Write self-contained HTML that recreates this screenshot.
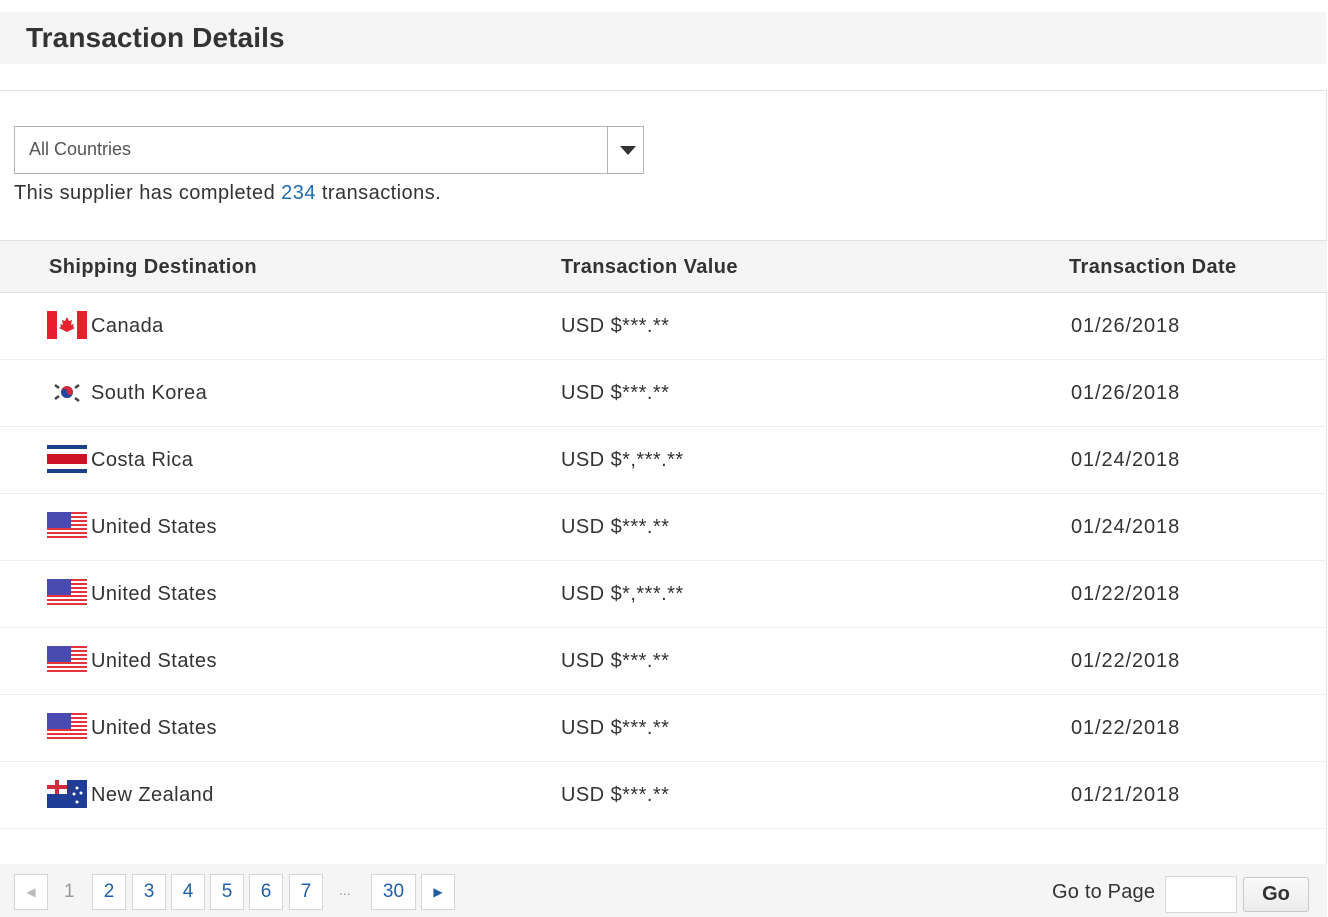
<!DOCTYPE html>
<html><head><meta charset="utf-8"><style>
*{margin:0;padding:0;box-sizing:border-box}
body{width:1328px;height:917px;background:#fff;font-family:"Liberation Sans",Arial,sans-serif;color:#333;position:relative;overflow:hidden}
.a{position:absolute}
.title{left:0;top:12px;width:1326px;height:52px;background:#f5f5f5;}
.title span{position:absolute;left:26px;top:10px;font-size:28px;font-weight:bold;color:#333;letter-spacing:0.1px}
.panel{left:0;top:90px;width:1327px;height:827px;border-top:1px solid #e3e3e3;border-right:1px solid #e3e3e3}
.sel{left:14px;top:126px;width:630px;height:48px;border:1px solid #b3b3b3;background:#fff}
.sel span{position:absolute;left:14px;top:12px;font-size:18px;color:#555}
.sel i{position:absolute;left:592px;top:0;width:1px;height:46px;background:#b3b3b3}
.sel b{position:absolute;left:605px;top:19px;border-left:8px solid transparent;border-right:8px solid transparent;border-top:9px solid #333}
.info{left:14px;top:182px;font-size:20px;color:#333;letter-spacing:0.45px}
.info em{font-style:normal;color:#1f6bb5}
.th{left:0;top:240px;width:1327px;height:53px;background:#f5f5f5;border-top:1px solid #e0e0e0;border-bottom:1px solid #e0e0e0}
.th span{position:absolute;top:15px;font-size:20px;font-weight:bold;color:#333;letter-spacing:0.4px}
.row{left:0;width:1327px;height:67px;border-bottom:1px solid #eee}
.row span{position:absolute;top:22px;font-size:20px;color:#333;letter-spacing:0.45px}
.row span.d{letter-spacing:0.9px}
.row svg{position:absolute;left:47px;top:18px}
.foot{left:0;top:864px;width:1327px;height:53px;background:#f5f5f5}
.pg{position:absolute;top:10px;height:36px;border:1px solid #d6d6d6;background:#fff;color:#1f5fa5;font-size:19px;text-align:center;line-height:34px}
</style></head><body>
<div class="a title"><span>Transaction Details</span></div>
<div class="a panel"></div>
<div class="a sel"><span>All Countries</span><i></i><b></b></div>
<div class="a info">This supplier has completed <em>234</em> transactions.</div>
<div class="a th"><span style="left:49px">Shipping Destination</span><span style="left:561px">Transaction Value</span><span style="left:1069px">Transaction Date</span></div>

<div class="a row" style="top:293px"><svg width="40" height="28"><rect width="40" height="28" fill="#fff"/><rect width="10" height="28" fill="#e8202e"/><rect x="30" width="10" height="28" fill="#e8202e"/><path d="M20 6l2 4 3-1-1 5 3-1-1 3 2 1-8 4-8-4 2-1-1-3 3 1-1-5 3 1z" fill="#e8202e"/></svg><span style="left:91px">Canada</span><span style="left:561px">USD $***.**</span><span class="d" style="left:1071px">01/26/2018</span></div>
<div class="a row" style="top:360px"><svg width="40" height="28"><circle cx="20" cy="14" r="6" fill="#d42a3c"/><path d="M14 14a6 6 0 0 0 12 0a3 3 0 0 1-6 0a3 3 0 0 0-6 0z" fill="#1f4aa0"/><g stroke="#444" stroke-width="2.5"><path d="M8 7l4 3M28 20l4 3M32 7l-4 3M8 21l4-3"/></g></svg><span style="left:91px">South Korea</span><span style="left:561px">USD $***.**</span><span class="d" style="left:1071px">01/26/2018</span></div>
<div class="a row" style="top:427px"><svg width="40" height="28"><rect width="40" height="28" fill="#fff"/><rect width="40" height="4" fill="#1b3f8b"/><rect y="24" width="40" height="4" fill="#1b3f8b"/><rect y="9" width="40" height="10" fill="#ce1126"/></svg><span style="left:91px">Costa Rica</span><span style="left:561px">USD $*,***.**</span><span class="d" style="left:1071px">01/24/2018</span></div>
<div class="a row" style="top:494px"><svg width="40" height="28"><rect width="40" height="28" fill="#fff"/><g fill="#e8323c"><rect y="0" width="40" height="2"/><rect y="4" width="40" height="2"/><rect y="8" width="40" height="2"/><rect y="12" width="40" height="2"/><rect y="16" width="40" height="2"/><rect y="20" width="40" height="2"/><rect y="24" width="40" height="2"/></g><rect width="24" height="16" fill="#4a4ab0"/></svg><span style="left:91px">United States</span><span style="left:561px">USD $***.**</span><span class="d" style="left:1071px">01/24/2018</span></div>
<div class="a row" style="top:561px"><svg width="40" height="28"><rect width="40" height="28" fill="#fff"/><g fill="#e8323c"><rect y="0" width="40" height="2"/><rect y="4" width="40" height="2"/><rect y="8" width="40" height="2"/><rect y="12" width="40" height="2"/><rect y="16" width="40" height="2"/><rect y="20" width="40" height="2"/><rect y="24" width="40" height="2"/></g><rect width="24" height="16" fill="#4a4ab0"/></svg><span style="left:91px">United States</span><span style="left:561px">USD $*,***.**</span><span class="d" style="left:1071px">01/22/2018</span></div>
<div class="a row" style="top:628px"><svg width="40" height="28"><rect width="40" height="28" fill="#fff"/><g fill="#e8323c"><rect y="0" width="40" height="2"/><rect y="4" width="40" height="2"/><rect y="8" width="40" height="2"/><rect y="12" width="40" height="2"/><rect y="16" width="40" height="2"/><rect y="20" width="40" height="2"/><rect y="24" width="40" height="2"/></g><rect width="24" height="16" fill="#4a4ab0"/></svg><span style="left:91px">United States</span><span style="left:561px">USD $***.**</span><span class="d" style="left:1071px">01/22/2018</span></div>
<div class="a row" style="top:695px"><svg width="40" height="28"><rect width="40" height="28" fill="#fff"/><g fill="#e8323c"><rect y="0" width="40" height="2"/><rect y="4" width="40" height="2"/><rect y="8" width="40" height="2"/><rect y="12" width="40" height="2"/><rect y="16" width="40" height="2"/><rect y="20" width="40" height="2"/><rect y="24" width="40" height="2"/></g><rect width="24" height="16" fill="#4a4ab0"/></svg><span style="left:91px">United States</span><span style="left:561px">USD $***.**</span><span class="d" style="left:1071px">01/22/2018</span></div>
<div class="a row" style="top:762px"><svg width="40" height="28"><rect width="40" height="28" fill="#1f3d96"/><rect width="20" height="14" fill="#fff"/><rect x="8" width="4" height="14" fill="#d42a3c"/><rect y="5" width="20" height="4" fill="#d42a3c"/><g fill="#fff"><circle cx="30" cy="8" r="1.5"/><circle cx="34" cy="13" r="1.5"/><circle cx="27" cy="14" r="1.5"/><circle cx="30" cy="22" r="1.5"/></g></svg><span style="left:91px">New Zealand</span><span style="left:561px">USD $***.**</span><span class="d" style="left:1071px">01/21/2018</span></div>

<div class="a foot">
<div class="pg" style="left:14px;width:34px;color:#bbb;font-size:12px">&#9664;</div>
<div class="a" style="left:64px;top:17px;font-size:19px;color:#999">1</div>
<div class="pg" style="left:92px;width:34px">2</div>
<div class="pg" style="left:132px;width:34px">3</div>
<div class="pg" style="left:171px;width:34px">4</div>
<div class="pg" style="left:210px;width:34px">5</div>
<div class="pg" style="left:249px;width:34px">6</div>
<div class="pg" style="left:289px;width:34px">7</div>
<div class="a" style="left:339px;top:18px;font-size:14px;color:#999">...</div>
<div class="pg" style="left:371px;width:45px">30</div>
<div class="pg" style="left:421px;width:34px;font-size:12px">&#9654;</div>
<div class="a" style="left:1052px;top:17px;font-size:20px;color:#333;letter-spacing:0.2px">Go to Page</div>
<div class="a" style="left:1165px;top:12px;width:72px;height:37px;background:#fff;border:1px solid #d6d6d6"></div>
<div class="a" style="left:1243px;top:13px;width:66px;height:35px;border:1px solid #c8c8c8;border-radius:3px;background:linear-gradient(#fafafa,#ececec);font-size:20px;font-weight:bold;text-align:center;line-height:33px;color:#333">Go</div>
</div>
</body></html>
